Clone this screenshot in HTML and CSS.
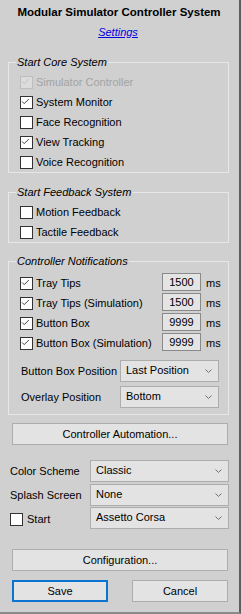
FILE: index.html
```html
<!DOCTYPE html>
<html>
<head>
<meta charset="utf-8">
<link rel="stylesheet" href="styles.css">
</head>
<body>
<div class="window">
  <div class="title">Modular Simulator Controller System</div>
  <div class="link-row"><a class="link">Settings</a></div>

  <fieldset class="group g1">
    <legend>Start Core System</legend>
    <div class="row disabled"><span class="cb"><svg viewBox="0 0 13 13"><polyline points="2.5,6.5 5,9 10.5,3.5"/></svg></span><span>Simulator Controller</span></div>
    <div class="row"><span class="cb"><svg viewBox="0 0 13 13"><polyline points="2.5,6.5 5,9 10.5,3.5"/></svg></span><span>System Monitor</span></div>
    <div class="row"><span class="cb"></span><span>Face Recognition</span></div>
    <div class="row"><span class="cb"><svg viewBox="0 0 13 13"><polyline points="2.5,6.5 5,9 10.5,3.5"/></svg></span><span>View Tracking</span></div>
    <div class="row"><span class="cb"></span><span>Voice Recognition</span></div>
  </fieldset>

  <fieldset class="group g2">
    <legend>Start Feedback System</legend>
    <div class="row"><span class="cb"></span><span>Motion Feedback</span></div>
    <div class="row"><span class="cb"></span><span>Tactile Feedback</span></div>
  </fieldset>

  <fieldset class="group g3">
    <legend>Controller Notifications</legend>
    <div class="row"><span class="cb"><svg viewBox="0 0 13 13"><polyline points="2.5,6.5 5,9 10.5,3.5"/></svg></span><span class="grow">Tray Tips</span><span class="edit">1500</span><span class="unit">ms</span></div>
    <div class="row"><span class="cb"><svg viewBox="0 0 13 13"><polyline points="2.5,6.5 5,9 10.5,3.5"/></svg></span><span class="grow">Tray Tips (Simulation)</span><span class="edit">1500</span><span class="unit">ms</span></div>
    <div class="row"><span class="cb"><svg viewBox="0 0 13 13"><polyline points="2.5,6.5 5,9 10.5,3.5"/></svg></span><span class="grow">Button Box</span><span class="edit">9999</span><span class="unit">ms</span></div>
    <div class="row"><span class="cb"><svg viewBox="0 0 13 13"><polyline points="2.5,6.5 5,9 10.5,3.5"/></svg></span><span class="grow">Button Box (Simulation)</span><span class="edit">9999</span><span class="unit">ms</span></div>
    <div class="selrow first"><span class="sellabel">Button Box Position</span><span class="select sel-a"><span>Last Position</span><svg viewBox="0 0 7 4"><polyline points="0.5,0.5 3.5,3.5 6.5,0.5"/></svg></span></div>
    <div class="selrow second"><span class="sellabel">Overlay Position</span><span class="select sel-a"><span>Bottom</span><svg viewBox="0 0 7 4"><polyline points="0.5,0.5 3.5,3.5 6.5,0.5"/></svg></span></div>
  </fieldset>

  <div class="button wide auto">Controller Automation...</div>

  <div class="optrow r1"><span class="optlabel">Color Scheme</span><span class="select sel-b"><span>Classic</span><svg viewBox="0 0 7 4"><polyline points="0.5,0.5 3.5,3.5 6.5,0.5"/></svg></span></div>
  <div class="optrow r2"><span class="optlabel">Splash Screen</span><span class="select sel-b"><span>None</span><svg viewBox="0 0 7 4"><polyline points="0.5,0.5 3.5,3.5 6.5,0.5"/></svg></span></div>
  <div class="optrow r3"><span class="optlabel start"><span class="cb"></span><span>Start</span></span><span class="select sel-b"><span>Assetto Corsa</span><svg viewBox="0 0 7 4"><polyline points="0.5,0.5 3.5,3.5 6.5,0.5"/></svg></span></div>

  <div class="button wide config">Configuration...</div>

  <div class="actions">
    <div class="button half save">Save</div>
    <div class="button half">Cancel</div>
  </div>
</div>
</body>
</html>
```

FILE: styles.css
```css
* { box-sizing: border-box; }
html, body { margin: 0; padding: 0; }
body {
  width: 241px;
  height: 614px;
  overflow: hidden;
  background: #d0d0d0;
  font-family: "Liberation Sans", Arial, sans-serif;
  font-size: 11px;
  color: #000;
}
.window {
  width: 241px;
  height: 614px;
  border-right: 2px solid #5e5e5e;
  border-bottom: 2px solid #8a8a8a;
  background: #d0d0d0;
}
.title {
  padding-top: 4px;
  line-height: 16px;
  text-align: center;
  font-weight: bold;
  font-size: 11.5px;
  padding-right: 1px;
}
.link-row {
  margin-top: 4px;
  line-height: 16px;
  text-align: center;
  padding-right: 3px;
}
.link {
  color: #0000e0;
  font-style: italic;
  text-decoration: underline;
}
.group {
  margin: 0 0 0 8px;
  width: 221px;
  border: 1px solid #e7e7e7;
  padding: 3px 0 0 0;
  min-inline-size: 0;
}
.group legend {
  margin-left: 7px;
  padding: 0 1px;
  font-style: italic;
  line-height: 14px;
  font-size: 11px;
}
.g1 { margin-top: 15px; }
.g2 { margin-top: 12px; }
.g3 { margin-top: 11px; padding-top: 5px; padding-bottom: 6px; }
.row {
  display: flex;
  align-items: center;
  height: 20px;
  padding-left: 11px;
}
.cb {
  width: 13px;
  height: 13px;
  flex: none;
  border: 1px solid #333;
  background: #fff;
  margin-right: 3px;
  display: block;
}
.cb svg {
  display: block;
  width: 11px;
  height: 11px;
  margin: -1px 0 0 -1px;
  overflow: visible;
}
.cb svg polyline {
  fill: none;
  stroke: #333;
  stroke-width: 1.1;
}
.disabled { color: #a3a3a3; }
.disabled .cb { border-color: #bdbdbd; background: #dcdcdc; }
.disabled .cb svg polyline { stroke: #bdbdbd; }
.grow { flex: 1; }
.edit {
  width: 39px;
  height: 18px;
  margin-top: -3px;
  border: 1px solid #8a8a8a;
  background: #e4e4e4;
  text-align: center;
  line-height: 16px;
  flex: none;
}
.unit {
  width: 27px;
  padding-left: 5px;
  flex: none;
}
.selrow {
  display: flex;
  align-items: center;
  height: 22px;
  padding-left: 12px;
}
.selrow.first { margin-top: 7px; }
.selrow.second { margin-top: 4px; }
.sellabel { width: 99px; flex: none; }
.select {
  display: flex;
  align-items: center;
  justify-content: space-between;
  height: 22px;
  border: 1px solid #adadad;
  background: #e3e3e3;
  padding: 0 6px 0 5px;
  line-height: 14px;
}
.select span { margin-top: -3px; }
.select svg {
  width: 7px;
  height: 4px;
  display: block;
}
.select svg polyline {
  fill: none;
  stroke: #707070;
  stroke-width: 1;
}
.sel-a { width: 99px; }
.sel-b { width: 139px; }
.button {
  height: 22px;
  border: 1px solid #adadad;
  background: #e3e3e3;
  display: flex;
  align-items: center;
  justify-content: center;
}
.wide { margin-left: 12px; width: 216px; }
.auto { margin-top: 8px; }
.optrow {
  display: flex;
  align-items: center;
  height: 22px;
  padding-left: 10px;
}
.optrow.r1 { margin-top: 15px; }
.optrow.r2 { margin-top: 2px; }
.optrow.r3 { margin-top: 1px; }
.optlabel { width: 80px; flex: none; }
.optlabel.start { display: flex; align-items: center; margin-top: 2px; }
.optlabel.start .cb { margin-right: 4px; }
.config { margin-top: 20px; }
.actions {
  display: flex;
  gap: 24px;
  margin: 9px 0 0 12px;
}
.half { width: 96px; }
.save { border: 2px solid #0a74d0; }
```
